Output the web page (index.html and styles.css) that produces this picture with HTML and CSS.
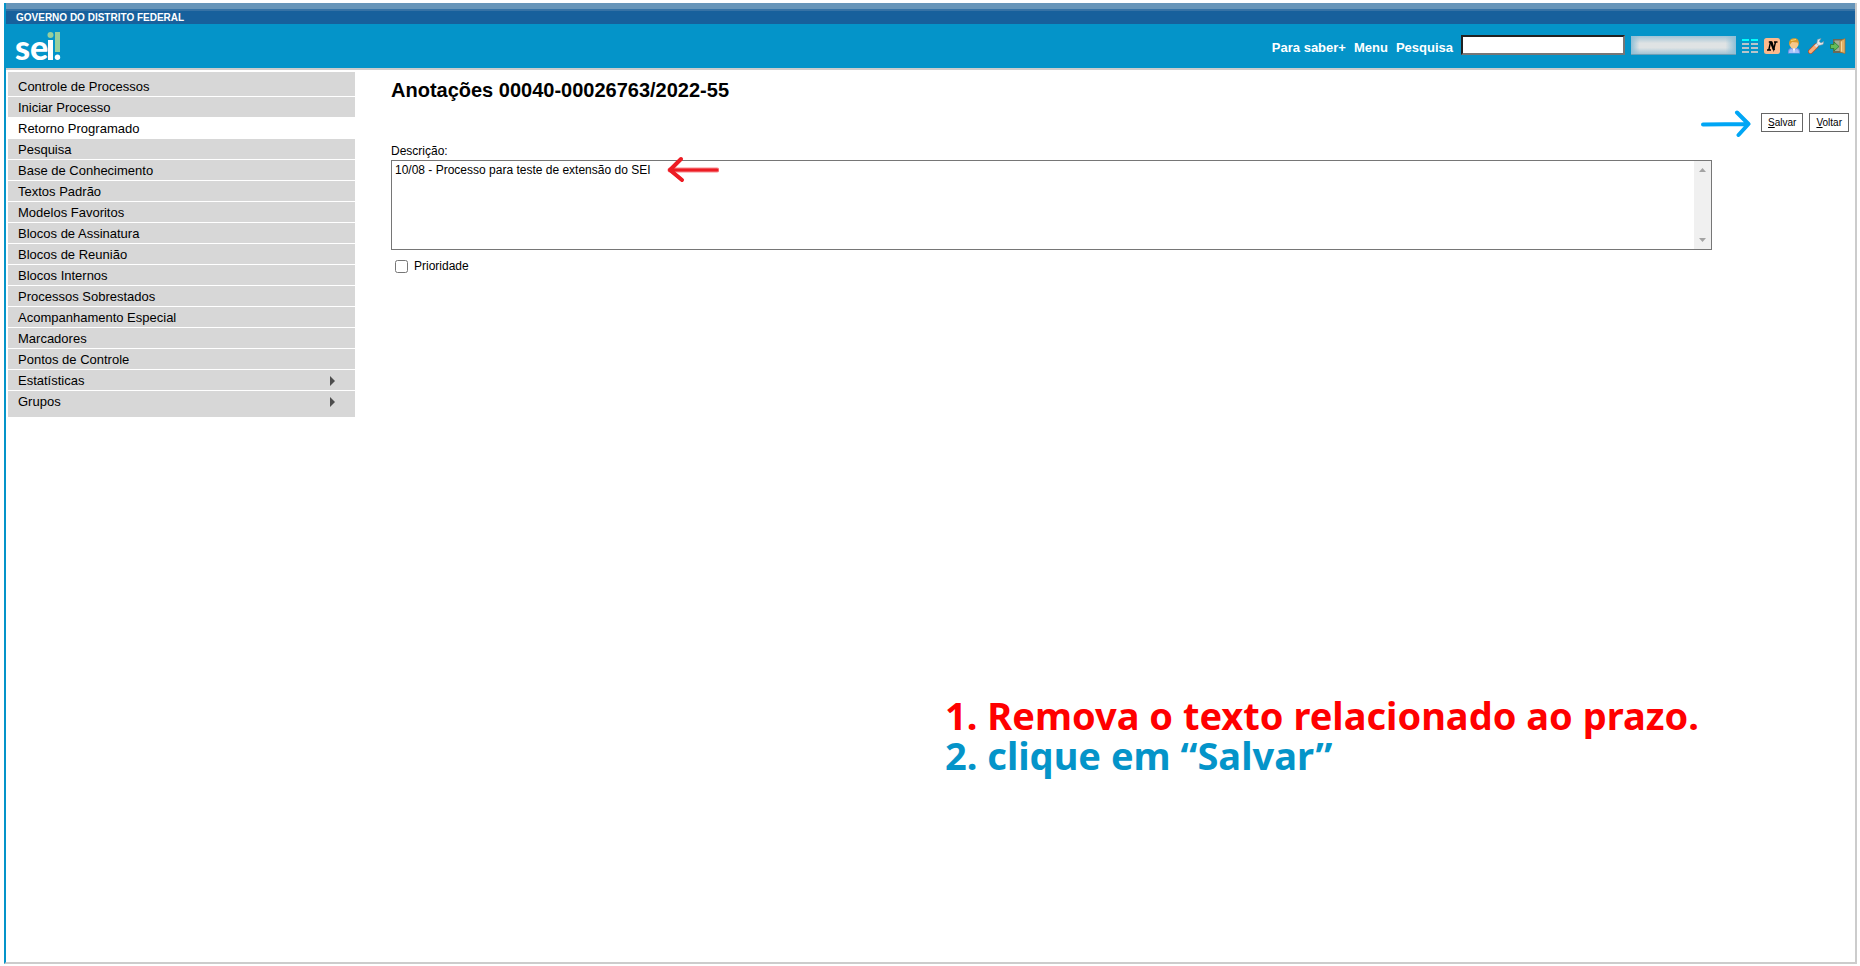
FILE: index.html
```html
<!DOCTYPE html>
<html lang="pt-BR">
<head>
<meta charset="utf-8">
<title>SEI - Anotações</title>
<link rel="stylesheet" href="styles.css">
</head>
<body>
<div class="frame">
  <div class="gov-bar">GOVERNO DO DISTRITO FEDERAL</div>
  <header class="system-bar">
    <svg class="logo" viewBox="0 0 48 38" role="img" aria-label="sei!">
      <rect x="39" y="1" width="5" height="20" fill="#98cf9c"/>
      <circle cx="34.500" cy="4" r="3" fill="#98cf9c"/>
      <text class="logo-text" x="-1" y="29">se</text>
      <rect x="32" y="9" width="5" height="20" fill="#fff"/>
      <circle cx="41.500" cy="26.300" r="2.700" fill="#fff"/>
    </svg>
    <nav class="tools" aria-label="Barra do sistema">
      <a class="tool-link" href="#">Para saber+</a>
      <a class="tool-link" href="#">Menu</a>
      <label class="tool-link" for="search">Pesquisa</label>
      <input class="search" id="search" type="text">
      <select class="unit" aria-label="Unidade"></select>
      <a class="icon" href="#" aria-label="Barra de menu">
        <svg viewBox="0 0 16 16"><path d="M0 2h7M9 2h7" stroke="#0ff" stroke-width="2"/><path d="M0 6h7M9 6h7M0 10h7M9 10h7M0 14h7M9 14h7" stroke="#b9c4ca" stroke-width="2"/></svg>
      </a>
      <a class="icon" href="#" aria-label="Novidades">
        <svg viewBox="0 0 16 16"><rect width="16" height="16" rx="2.500" fill="#fdb98c"/><path d="M3 12h4M4.800 12L6.500 4M4.800 4H7.200L9.700 11.500L11.500 4M10 4h3.500" fill="none" stroke="#000" stroke-width="1.400"/><path d="M5.600 3.500h2.800L11 12H8.800z"/></svg>
      </a>
      <a class="icon" href="#" aria-label="Usuário">
        <svg viewBox="0 0 16 16"><path d="M2 15.500C1.500 11 4 9.500 8 9.500s6.500 1.500 6 6z" fill="#6f93e8"/><path d="M3 15c0-3 1-4 3-4l2 2 2-2c2 0 3 1 3 4" fill="#a9c0f8"/><path d="M6.500 10h3L8 15z" fill="#f4f4ff"/><circle cx="8" cy="6" r="4.500" fill="#f6c88c"/><path d="M3.200 7.500C2.500 2 5 .3 8.500.3S13.500 3 12.800 7.500L11.500 4.500 6 4z" fill="#d89a2c"/><path d="M5 2.500l5-1" stroke="#f8d870"/></svg>
      </a>
      <a class="icon" href="#" aria-label="Configurações">
        <svg viewBox="0 0 16 16"><path d="M2.500 13.500L8 8" stroke="#b9542c" stroke-width="5" stroke-linecap="round"/><path d="M2.500 13.500L8 8" stroke="#f9ae78" stroke-width="3.400" stroke-linecap="round"/><path d="M7.500 8.500L11 5" stroke="#d8dde2" stroke-width="3"/><path d="M13 .5L9.500 1.500 8.800 5.500l2 2L15 6.500l.8-3L13 5 11.200 3.500z" fill="#e7ebee" stroke="#82929d" stroke-width=".6"/></svg>
      </a>
      <a class="icon" href="#" aria-label="Sair">
        <svg viewBox="0 0 16 16"><path d="M3 1h12v14H3z" fill="#6c6958"/><path d="M4.500 2.500h7V13h-7z" fill="#a2ae96"/><path d="M10 3l5-2.500v15L10 14z" fill="#e2b064" stroke="#a36d2b" stroke-width=".7"/><path d="M11.500 3.500v10" stroke="#f6d79a"/><path d="M.5 6.500H4V4l5 4.500-5 4.500v-2.500H.5z" fill="#64bc58" stroke="#247b35" stroke-width=".8"/></svg>
      </a>
    </nav>
  </header>

  <div class="body">
    <nav class="menu" aria-label="Menu principal">
      <a href="#">Controle de Processos</a>
      <a href="#">Iniciar Processo</a>
      <a class="active" href="#">Retorno Programado</a>
      <a href="#">Pesquisa</a>
      <a href="#">Base de Conhecimento</a>
      <a href="#">Textos Padrão</a>
      <a href="#">Modelos Favoritos</a>
      <a href="#">Blocos de Assinatura</a>
      <a href="#">Blocos de Reunião</a>
      <a href="#">Blocos Internos</a>
      <a href="#">Processos Sobrestados</a>
      <a href="#">Acompanhamento Especial</a>
      <a href="#">Marcadores</a>
      <a href="#">Pontos de Controle</a>
      <a class="parent" href="#">Estatísticas</a>
      <a class="parent" href="#">Grupos</a>
    </nav>

    <main class="content">
      <h1>Anotações 00040-00026763/2022-55</h1>
      <form>
        <div class="actions">
          <svg class="arrow-save" viewBox="0 0 50 28" aria-hidden="true"><path d="M2 14.500L47 14M36 2.500L47.500 14 37.500 25" fill="none" stroke="#00a6f5" stroke-width="4" stroke-linecap="round" stroke-linejoin="round"/></svg>
          <button class="btn" type="button"><u>S</u>alvar</button>
          <button class="btn" type="button"><u>V</u>oltar</button>
        </div>
        <label class="field-label" for="description">Descrição:</label>
        <div class="text-box">
          <textarea id="description">10/08 - Processo para teste de extensão do SEI</textarea>
          <div class="scroll-track" aria-hidden="true">
            <svg viewBox="0 0 7 4"><path d="M0 4L3.500 0 7 4z" fill="#a3a3a3"/></svg>
            <svg viewBox="0 0 7 4"><path d="M0 0L3.500 4 7 0z" fill="#a3a3a3"/></svg>
          </div>
          <svg class="arrow-text" viewBox="0 0 52 28" aria-hidden="true"><path d="M50 14H3" stroke="#f58a8e" stroke-width="5" stroke-linecap="round"/><path d="M50 14H3M14 3L3 14l12 10" fill="none" stroke="#ed1c24" stroke-width="3" stroke-linecap="round" stroke-linejoin="round"/><path d="M14 3L3 14l12 10" fill="none" stroke="#ed1c24" stroke-width="4" stroke-linecap="round" stroke-linejoin="round"/></svg>
        </div>
        <div class="priority">
          <input id="priority" type="checkbox">
          <label for="priority">Prioridade</label>
        </div>
      </form>
      <div class="steps">
        <p class="step-remove">1. Remova o texto relacionado ao prazo.</p>
        <p class="step-save">2. clique em “Salvar”</p>
      </div>
    </main>
  </div>
</div>
</body>
</html>
```
FILE: styles.css
```css
* {
  box-sizing: border-box;
}

body {
  margin: 0;
  padding: 3px 3px 2px 4px;
  min-height: 100vh;
  display: flex;
  background: #fff;
  color: #000;
  font-family: "Liberation Sans", Arial, sans-serif;
  font-size: 12px;
}

a {
  color: inherit;
  text-decoration: none;
}

.frame {
  flex: 1;
  display: flex;
  flex-direction: column;
  border: 2px solid #ccc;
  border-top: 0;
  border-left-color: #0494c9;
}

.gov-bar {
  height: 21px;
  padding: 8px 10px 0;
  background: linear-gradient(#6795b9 0 6px, #3672a5 6px 8px, #17609c 8px);
  color: #fff;
  font-size: 10px;
  font-weight: bold;
  line-height: 13px;
}

.system-bar {
  display: flex;
  align-items: flex-start;
  justify-content: space-between;
  height: 46px;
  padding: 7px 9px 0 10px;
  background: #0494c9;
  border-bottom: 2px solid #ccc;
}

.logo {
  width: 48px;
  height: 38px;
  overflow: visible;
}

.logo-text {
  fill: #fff;
  font-family: Lato, sans-serif;
  font-size: 34px;
  font-weight: 900;
}

.tools {
  display: flex;
  align-items: center;
  gap: 6px;
  padding-top: 3px;
}

.tool-link {
  margin-right: 2px;
  padding-top: 6px;
  color: #fff;
  font-size: 13px;
  font-weight: bold;
  line-height: 15px;
}

.search {
  width: 164px;
  height: 20px;
  margin: 0;
  border: 2px inset #767676;
  border-radius: 0;
  background: #fff;
}

.unit {
  appearance: none;
  width: 105px;
  height: 19px;
  margin: 2px 0 0;
  border: 0;
  border-bottom: 1px solid #6f9fb5;
  border-radius: 0;
  background:
    linear-gradient(90deg, #8fbfd6, transparent 8% 90%, #8fbfd6),
    linear-gradient(#9fc3d6, #dfe3e4 40% 65%, #a3c4d5);
}

.icon {
  padding-top: 2px;
}

.icon svg {
  display: block;
  width: 16px;
  height: 16px;
}

.body {
  flex: 1;
  display: flex;
  align-items: flex-start;
  padding: 2px 6px 0 2px;
}

.menu {
  flex: none;
  width: 347px;
  padding: 4px 0 5px;
  background: #d7d7d7;
}

.menu a {
  display: flex;
  align-items: center;
  justify-content: space-between;
  height: 21px;
  padding: 1px 20px 0 10px;
  border-bottom: 1px solid #fff;
  font-size: 13px;
  line-height: 19px;
}

.menu a:last-child {
  border-bottom-color: transparent;
}

.menu .active {
  background: #fff;
}

.parent::after {
  content: "";
  border: 5px solid transparent;
  border-left-color: #4d4d4d;
  border-right-width: 0;
}

.content {
  flex: 1;
  padding: 6px 0 0 36px;
}

h1 {
  margin: 0;
  font-size: 20px;
  line-height: 24px;
}

.actions {
  display: flex;
  justify-content: flex-end;
  align-items: flex-start;
  gap: 6px;
  margin-top: 8px;
}

.arrow-save {
  width: 50px;
  height: 28px;
  margin-right: 4px;
}

.btn {
  height: 19px;
  margin: 3px 0 0;
  padding: 0 6px;
  border: 1px solid #666;
  border-radius: 0;
  background: #fff;
  color: #000;
  font: 10px/15px "Liberation Sans", Arial, sans-serif;
}

.field-label {
  display: block;
  margin-top: 5px;
  padding-bottom: 1px;
  line-height: 16px;
}

.text-box {
  position: relative;
  display: flex;
  width: 90.6%;
  height: 90px;
  border: 1px solid #767676;
}

textarea {
  flex: 1;
  margin: 0;
  padding: 2px 3px;
  border: 0;
  outline: 0;
  resize: none;
  overflow: hidden;
  background: #fff;
  color: #000;
  font: 12px/14px "Liberation Sans", Arial, sans-serif;
}

.scroll-track {
  display: flex;
  flex-direction: column;
  align-items: center;
  justify-content: space-between;
  width: 17px;
  padding: 7px 0;
  background: #f0f0f0;
}

.scroll-track svg {
  width: 7px;
  height: 4px;
}

.arrow-text {
  position: absolute;
  top: -5px;
  left: 275px;
  width: 52px;
  height: 28px;
}

.priority {
  display: flex;
  align-items: center;
  gap: 6px;
  margin-top: 8px;
  padding-left: 4px;
  line-height: 16px;
}

.priority input {
  width: 13px;
  height: 13px;
  margin: 0;
}

.steps {
  width: 62%;
  margin-top: 421px;
  margin-left: 38%;
  font-family: "Noto Sans", "Open Sans", sans-serif;
  font-size: 38px;
  font-weight: bold;
  line-height: 40px;
}

.steps p {
  margin: 0;
}

.step-remove {
  color: #f00;
}

.step-save {
  color: #0494c9;
}
```
